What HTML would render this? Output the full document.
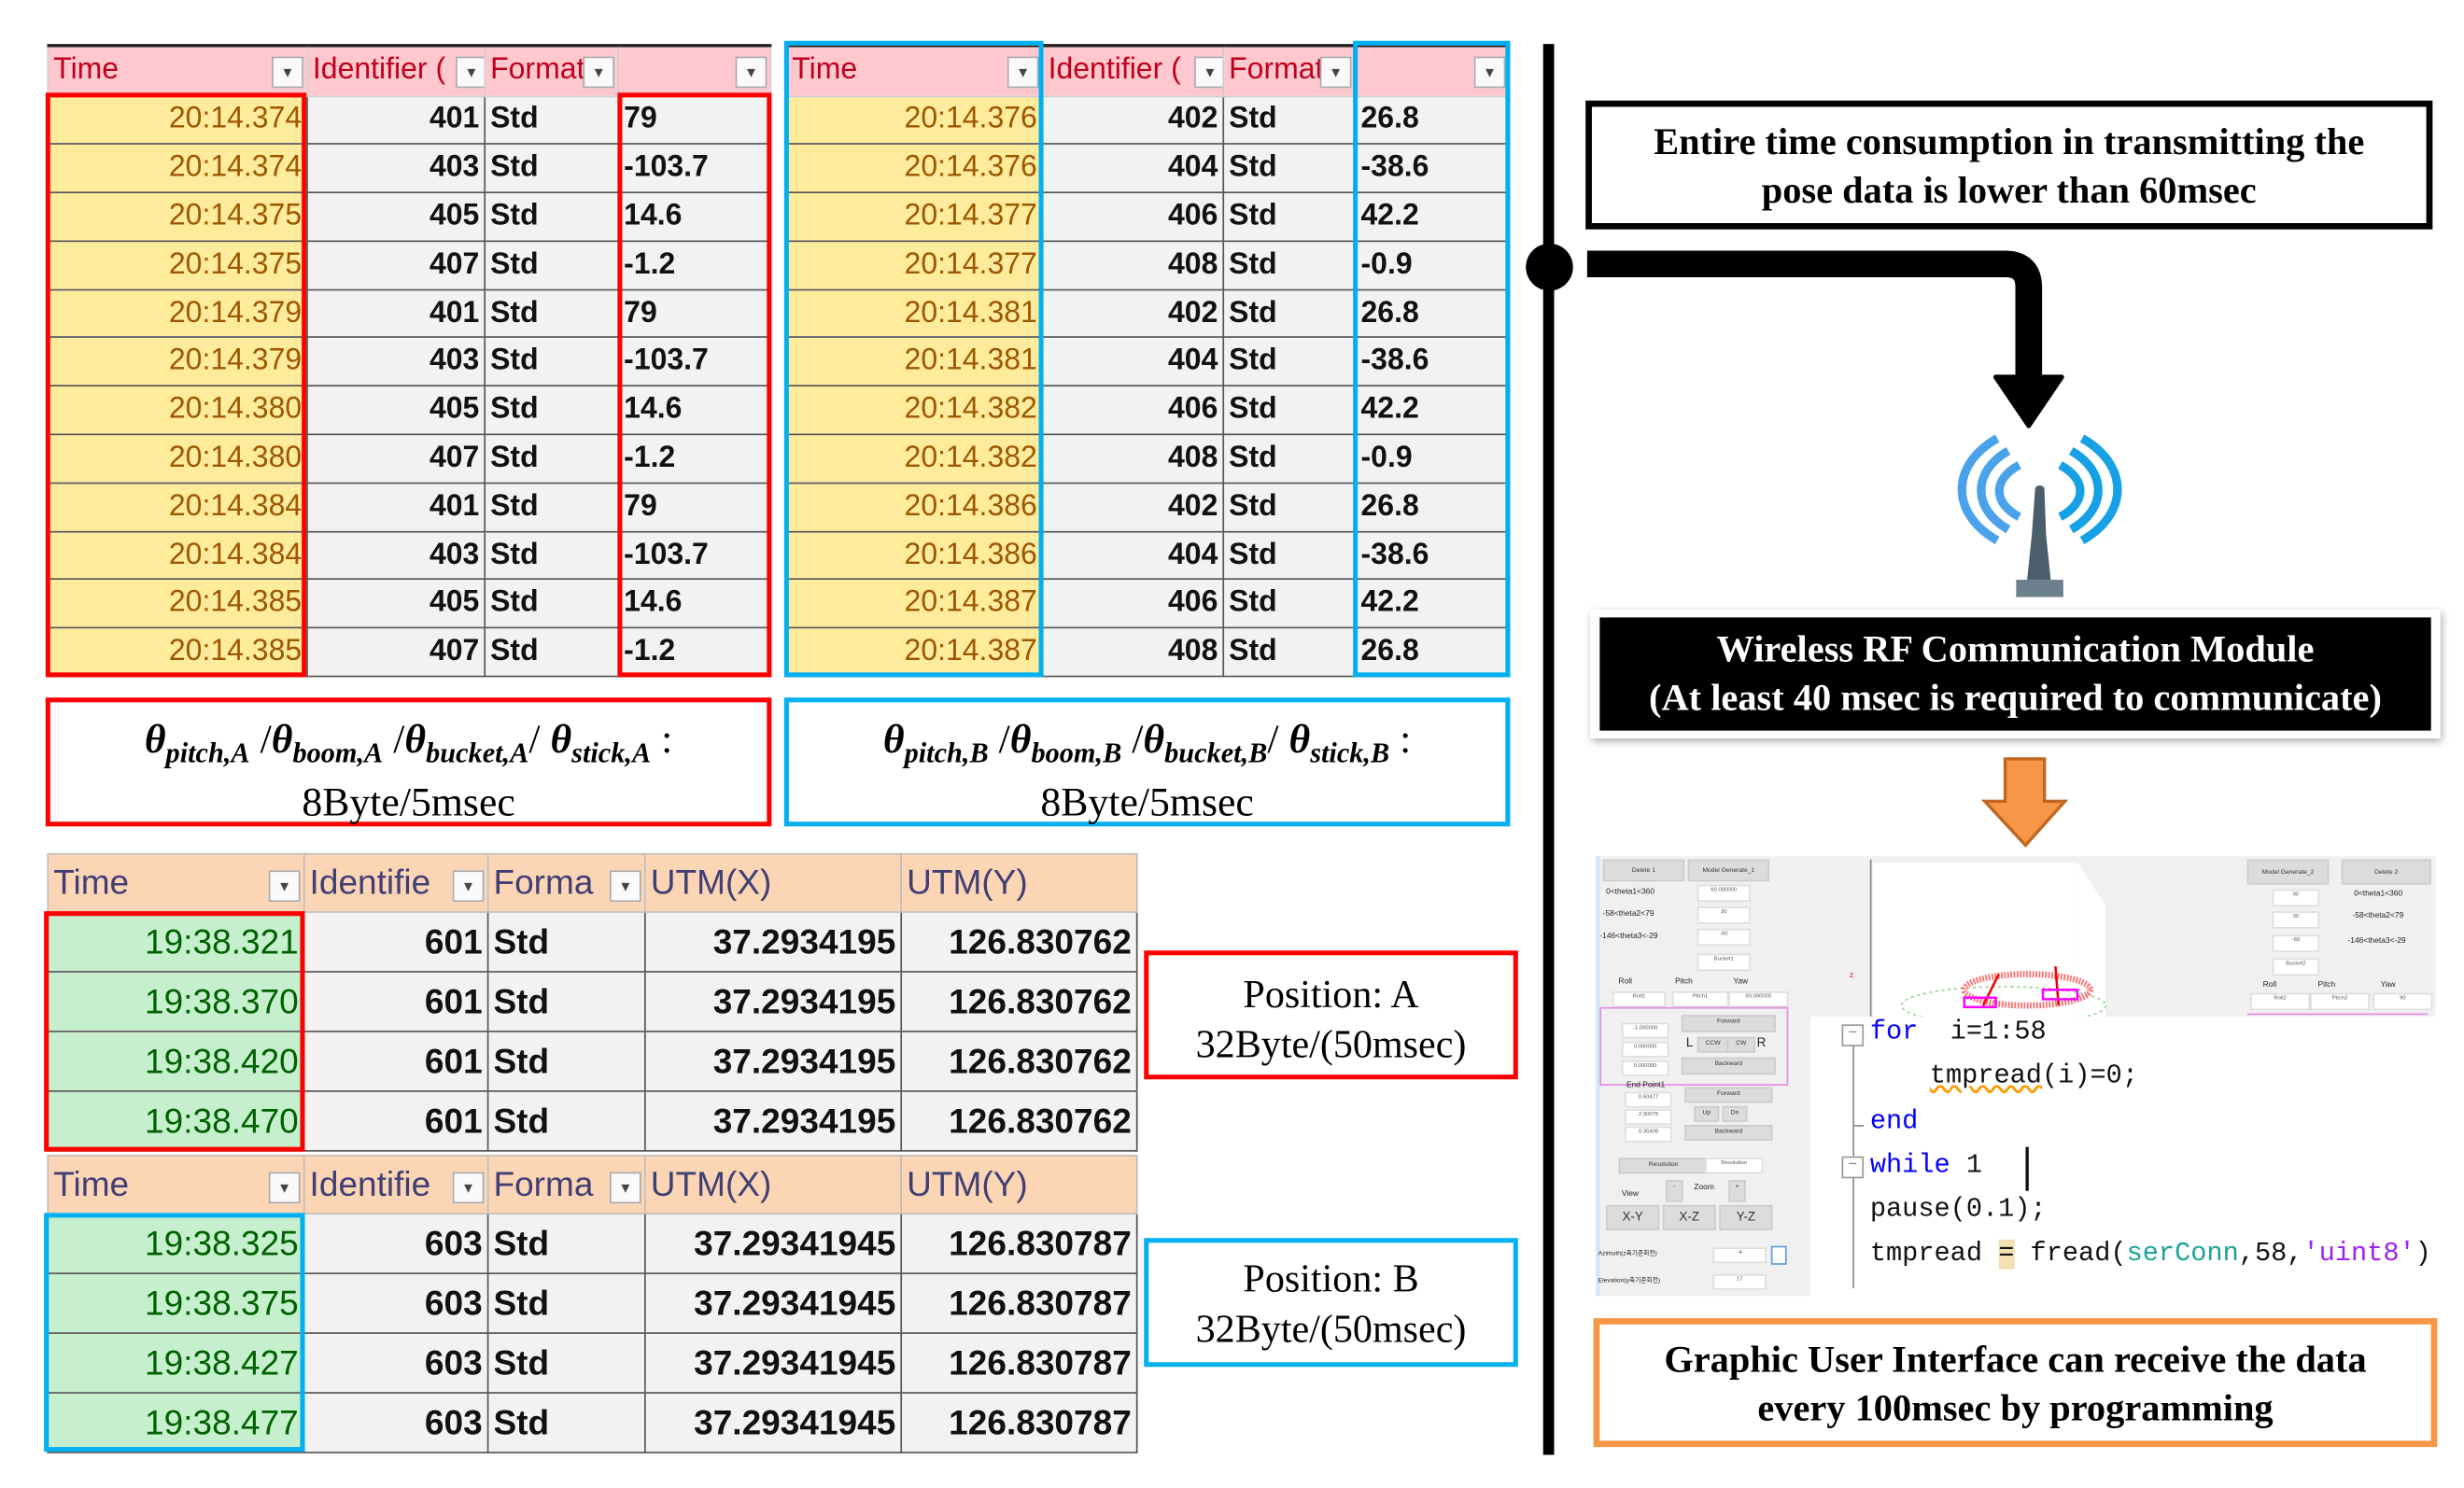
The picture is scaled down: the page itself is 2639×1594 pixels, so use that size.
<!DOCTYPE html>
<html><head><meta charset="utf-8">
<style>
html,body{margin:0;padding:0;background:#fff;width:2639px;height:1593px;overflow:hidden}
#w{position:absolute;left:0;top:0;width:1568px;height:947px;transform:scale(1.68304);transform-origin:0 0;font-family:"Liberation Sans Narrow","Liberation Sans",sans-serif}
.a{position:absolute}
table{border-collapse:collapse;table-layout:fixed;position:absolute;font-size:19px}
td{padding:0 3px;white-space:nowrap;overflow:hidden;border:1px solid #555;background:#f2f2f2;color:#111}
td.r{text-align:right}
.t1 tr.h td{background:#ffc7ce;color:#c0001a;border-color:#ccc;border-top:2px solid #222}
.t1 td.y{background:#ffeb9c;color:#9c5700}
.t2 tr.h td{background:#fcd5b4;color:#3f3f76;border-color:#bbb}
.t2 td.g{background:#c6efce;color:#006100}
.t2{font-size:22px}
.t2 td{font-weight:bold}
.t2 td.g,.t2 tr.h td{font-weight:normal}
.dd{position:absolute;right:2px;top:6px;width:18px;height:18px;background:#fafafa;border:1px solid #aaa;font-size:9px;text-align:center;line-height:18px;color:#444}
.rb{position:absolute;border:3.5px solid #f00;box-sizing:border-box}
.bb{position:absolute;border:3.5px solid #00b0f0;box-sizing:border-box}
.ser{font-family:"Liberation Serif",serif;font-weight:bold;color:#000;text-align:center}
.cap{font-family:"Liberation Serif",serif;text-align:center;font-size:26px;line-height:32px}
.cap i{font-weight:bold}
.cap sub{font-size:18px}
.btn{position:absolute;background:#dcdcdc;border:1px solid #ccc;font-size:4px;color:#333;text-align:center;font-family:"Liberation Sans",sans-serif}
.inp{position:absolute;background:#fff;border:1px solid #ddd;font-size:3.5px;text-align:center;color:#555}
.lb{position:absolute;font-size:5px;color:#222;font-family:"Liberation Sans",sans-serif}
.code{position:absolute;font-family:"Liberation Mono",monospace;font-size:17px;color:#111;white-space:pre}
</style></head><body><div id="w">

<table class="t1" style="left:30px;top:28px;width:460px">
<colgroup><col style="width:165px"><col style="width:113px"><col style="width:85px"><col style="width:97px"></colgroup>
<tr class="h" style="height:32px"><td style="position:relative">Time<span class="dd">▼</span></td><td style="position:relative">Identifier (<span class="dd" style="right:-2px">▼</span></td><td style="position:relative">Format<span class="dd">▼</span></td><td style="position:relative"><span class="dd">▼</span></td></tr>
<tr style="height:30.8px"><td class="y r">20:14.374</td><td class="r"><b>401</b></td><td><b>Std</b></td><td><b>79</b></td></tr>
<tr style="height:30.8px"><td class="y r">20:14.374</td><td class="r"><b>403</b></td><td><b>Std</b></td><td><b>-103.7</b></td></tr>
<tr style="height:30.8px"><td class="y r">20:14.375</td><td class="r"><b>405</b></td><td><b>Std</b></td><td><b>14.6</b></td></tr>
<tr style="height:30.8px"><td class="y r">20:14.375</td><td class="r"><b>407</b></td><td><b>Std</b></td><td><b>-1.2</b></td></tr>
<tr style="height:30.8px"><td class="y r">20:14.379</td><td class="r"><b>401</b></td><td><b>Std</b></td><td><b>79</b></td></tr>
<tr style="height:30.8px"><td class="y r">20:14.379</td><td class="r"><b>403</b></td><td><b>Std</b></td><td><b>-103.7</b></td></tr>
<tr style="height:30.8px"><td class="y r">20:14.380</td><td class="r"><b>405</b></td><td><b>Std</b></td><td><b>14.6</b></td></tr>
<tr style="height:30.8px"><td class="y r">20:14.380</td><td class="r"><b>407</b></td><td><b>Std</b></td><td><b>-1.2</b></td></tr>
<tr style="height:30.8px"><td class="y r">20:14.384</td><td class="r"><b>401</b></td><td><b>Std</b></td><td><b>79</b></td></tr>
<tr style="height:30.8px"><td class="y r">20:14.384</td><td class="r"><b>403</b></td><td><b>Std</b></td><td><b>-103.7</b></td></tr>
<tr style="height:30.8px"><td class="y r">20:14.385</td><td class="r"><b>405</b></td><td><b>Std</b></td><td><b>14.6</b></td></tr>
<tr style="height:30.8px"><td class="y r">20:14.385</td><td class="r"><b>407</b></td><td><b>Std</b></td><td><b>-1.2</b></td></tr>
</table>
<div class="rb" style="left:29px;top:59px;width:166px;height:372px"></div>
<div class="rb" style="left:393px;top:59px;width:98px;height:372px"></div>

<table class="t1" style="left:500px;top:28px;width:460px">
<colgroup><col style="width:163px"><col style="width:115px"><col style="width:84px"><col style="width:98px"></colgroup>
<tr class="h" style="height:32px"><td style="position:relative">Time<span class="dd">▼</span></td><td style="position:relative">Identifier (<span class="dd" style="right:-2px">▼</span></td><td style="position:relative">Format<span class="dd">▼</span></td><td style="position:relative"><span class="dd">▼</span></td></tr>
<tr style="height:30.8px"><td class="y r">20:14.376</td><td class="r"><b>402</b></td><td><b>Std</b></td><td><b>26.8</b></td></tr>
<tr style="height:30.8px"><td class="y r">20:14.376</td><td class="r"><b>404</b></td><td><b>Std</b></td><td><b>-38.6</b></td></tr>
<tr style="height:30.8px"><td class="y r">20:14.377</td><td class="r"><b>406</b></td><td><b>Std</b></td><td><b>42.2</b></td></tr>
<tr style="height:30.8px"><td class="y r">20:14.377</td><td class="r"><b>408</b></td><td><b>Std</b></td><td><b>-0.9</b></td></tr>
<tr style="height:30.8px"><td class="y r">20:14.381</td><td class="r"><b>402</b></td><td><b>Std</b></td><td><b>26.8</b></td></tr>
<tr style="height:30.8px"><td class="y r">20:14.381</td><td class="r"><b>404</b></td><td><b>Std</b></td><td><b>-38.6</b></td></tr>
<tr style="height:30.8px"><td class="y r">20:14.382</td><td class="r"><b>406</b></td><td><b>Std</b></td><td><b>42.2</b></td></tr>
<tr style="height:30.8px"><td class="y r">20:14.382</td><td class="r"><b>408</b></td><td><b>Std</b></td><td><b>-0.9</b></td></tr>
<tr style="height:30.8px"><td class="y r">20:14.386</td><td class="r"><b>402</b></td><td><b>Std</b></td><td><b>26.8</b></td></tr>
<tr style="height:30.8px"><td class="y r">20:14.386</td><td class="r"><b>404</b></td><td><b>Std</b></td><td><b>-38.6</b></td></tr>
<tr style="height:30.8px"><td class="y r">20:14.387</td><td class="r"><b>406</b></td><td><b>Std</b></td><td><b>42.2</b></td></tr>
<tr style="height:30.8px"><td class="y r">20:14.387</td><td class="r"><b>408</b></td><td><b>Std</b></td><td><b>26.8</b></td></tr>
</table>
<div class="bb" style="left:499px;top:26px;width:165px;height:405px"></div>
<div class="bb" style="left:861px;top:26px;width:100px;height:405px"></div>

<div class="rb cap" style="left:29px;top:444px;width:462px;height:82px;padding-top:8px">
<i>θ<sub>pitch,A</sub></i> /<i>θ<sub>boom,A</sub></i> /<i>θ<sub>bucket,A</sub></i>/ <i>θ<sub>stick,A</sub></i> :<br>8Byte/5msec</div>
<div class="bb cap" style="left:499px;top:444px;width:462px;height:82px;padding-top:8px">
<i>θ<sub>pitch,B</sub></i> /<i>θ<sub>boom,B</sub></i> /<i>θ<sub>bucket,B</sub></i>/ <i>θ<sub>stick,B</sub></i> :<br>8Byte/5msec</div>

<table class="t2" style="left:30px;top:543px;width:693px">
<colgroup><col style="width:163px"><col style="width:117px"><col style="width:100px"><col style="width:163px"><col style="width:150px"></colgroup>
<tr class="h" style="height:37px"><td style="position:relative">Time<span class="dd" style="top:10px">▼</span></td><td style="position:relative">Identifie<span class="dd" style="top:10px">▼</span></td><td style="position:relative">Forma<span class="dd" style="top:10px">▼</span></td><td>UTM(X)</td><td>UTM(Y)</td></tr>
<tr style="height:38px"><td class="g r">19:38.321</td><td class="r">601</td><td>Std</td><td class="r">37.2934195</td><td class="r">126.830762</td></tr>
<tr style="height:38px"><td class="g r">19:38.370</td><td class="r">601</td><td>Std</td><td class="r">37.2934195</td><td class="r">126.830762</td></tr>
<tr style="height:38px"><td class="g r">19:38.420</td><td class="r">601</td><td>Std</td><td class="r">37.2934195</td><td class="r">126.830762</td></tr>
<tr style="height:38px"><td class="g r">19:38.470</td><td class="r">601</td><td>Std</td><td class="r">37.2934195</td><td class="r">126.830762</td></tr>
</table>
<div class="rb" style="left:28px;top:580px;width:166px;height:153px"></div>
<table class="t2" style="left:30px;top:735px;width:693px">
<colgroup><col style="width:163px"><col style="width:117px"><col style="width:100px"><col style="width:163px"><col style="width:150px"></colgroup>
<tr class="h" style="height:37px"><td style="position:relative">Time<span class="dd" style="top:10px">▼</span></td><td style="position:relative">Identifie<span class="dd" style="top:10px">▼</span></td><td style="position:relative">Forma<span class="dd" style="top:10px">▼</span></td><td>UTM(X)</td><td>UTM(Y)</td></tr>
<tr style="height:38px"><td class="g r">19:38.325</td><td class="r">603</td><td>Std</td><td class="r">37.29341945</td><td class="r">126.830787</td></tr>
<tr style="height:38px"><td class="g r">19:38.375</td><td class="r">603</td><td>Std</td><td class="r">37.29341945</td><td class="r">126.830787</td></tr>
<tr style="height:38px"><td class="g r">19:38.427</td><td class="r">603</td><td>Std</td><td class="r">37.29341945</td><td class="r">126.830787</td></tr>
<tr style="height:38px"><td class="g r">19:38.477</td><td class="r">603</td><td>Std</td><td class="r">37.29341945</td><td class="r">126.830787</td></tr>
</table>
<div class="bb" style="left:28px;top:772px;width:166px;height:152px"></div>

<div class="rb cap" style="left:728px;top:605px;width:238px;height:82px;padding-top:10px;line-height:32px;font-size:25px">Position: A<br>32Byte/(50msec)</div>
<div class="bb cap" style="left:728px;top:788px;width:238px;height:82px;padding-top:8px;line-height:32px;font-size:25px">Position: B<br>32Byte/(50msec)</div>

<div class="a" style="left:982px;top:28px;width:7px;height:898px;background:#000"></div>
<svg class="a" style="left:960px;top:140px" width="400" height="250" viewBox="960 140 400 250">
<circle cx="986" cy="170" r="15" fill="#000"/>
<path d="M1010 168 H1276 Q1291 168 1291 183 V245" stroke="#000" stroke-width="17" fill="none"/>
<path d="M1270 240 H1312 L1291 271 Z" fill="#000" stroke="#000" stroke-width="3" stroke-linejoin="round"/>
<g fill="none" stroke-width="5.5">
<path d="M1271 279 C1241 296 1241 327 1271 344" stroke="#4aa3ea"/>
<path d="M1278 287 C1255 300 1255 324 1278 337" stroke="#4aa3ea"/>
<path d="M1285 296 C1268 305 1268 320 1285 329" stroke="#4aa3ea"/>
<path d="M1325 279 C1355 296 1355 327 1325 344" stroke="#16a0e6"/>
<path d="M1318 287 C1341 300 1341 324 1318 337" stroke="#16a0e6"/>
<path d="M1311 296 C1328 305 1328 320 1311 329" stroke="#16a0e6"/>
</g>
<path d="M1295 312 Q1295 309 1298 309 Q1301 309 1301 312 L1302 340 L1305 369 L1290 369 L1293 340 Z" fill="#4b5e6c"/>
<rect x="1283" y="369" width="30" height="11" fill="#6c7f8d"/>
</svg>

<div class="a ser" style="left:1009px;top:64px;width:539px;height:82px;box-sizing:border-box;border:4px solid #000;font-size:24px;line-height:31px;padding-top:8px">Entire time consumption in transmitting the<br>pose data is lower than 60msec</div>

<div class="a" style="left:1012px;top:388px;width:541px;height:82px;background:#fff;box-shadow:1px 2px 5px rgba(0,0,0,.35)"></div>
<div class="a ser" style="left:1018px;top:393px;width:529px;height:72px;background:#000;color:#fff;font-size:24px;line-height:31px;padding-top:6px;box-sizing:border-box">Wireless RF Communication Module<br>(At least 40 msec is required to communicate)</div>

<svg class="a" style="left:1260px;top:480px" width="58" height="62" viewBox="0 0 58 62">
<path d="M16 3 H41 V30 H54 L29 58 L3 30 H16 Z" fill="#f79646" stroke="#c0661f" stroke-width="2"/>
</svg>

<div class="a" style="left:1015px;top:545px;width:535px;height:280px;background:#f0f0f0"></div>
<div class="a" style="left:1016px;top:545px;width:2px;height:280px;background:#cfe4f7"></div>
<div class="a" style="left:1192px;top:549px;width:128px;height:98px;background:#fff"></div>
<div class="a" style="left:1320px;top:549px;width:20px;height:98px;background:#fff;clip-path:polygon(0 0,10% 0,100% 28%,100% 100%,0 100%)"></div>
<div class="a" style="left:1190px;top:547px;width:1px;height:100px;background:#888"></div>
<svg class="a" style="left:1190px;top:595px" width="160" height="52">
<ellipse cx="85" cy="45" rx="65" ry="12" fill="none" stroke="#9bd49b" stroke-dasharray="2 2"/>
<ellipse cx="100" cy="35" rx="40" ry="10" fill="none" stroke="#f66" stroke-width="4" stroke-dasharray="1 1"/>
<path d="M72 45 L82 25 M120 45 L118 20" stroke="#e00" stroke-width="1.5"/>
<rect x="60" y="40" width="20" height="6" fill="none" stroke="#f0f" stroke-width="1.5"/>
<rect x="110" y="35" width="22" height="6" fill="none" stroke="#f0f" stroke-width="1.5"/>
</svg>
<div class="lb" style="left:1177px;top:618px;color:#e00">z</div>

<div class="btn" style="left:1020px;top:547px;width:50px;height:12px;line-height:12px">Delete 1</div>
<div class="btn" style="left:1074px;top:547px;width:50px;height:12px;line-height:12px">Model Generate_1</div>
<div class="lb" style="left:1022px;top:565px">0&lt;theta1&lt;360</div>
<div class="lb" style="left:1020px;top:579px">-58&lt;theta2&lt;79</div>
<div class="lb" style="left:1018px;top:593px">-146&lt;theta3&lt;-29</div>
<div class="inp" style="left:1080px;top:563px;width:32px;height:9px">60.000000</div>
<div class="inp" style="left:1080px;top:577px;width:32px;height:9px">30</div>
<div class="inp" style="left:1080px;top:591px;width:32px;height:9px">-60</div>
<div class="inp" style="left:1080px;top:607px;width:32px;height:9px">Bucket1</div>
<div class="lb" style="left:1030px;top:622px">Roll</div><div class="lb" style="left:1066px;top:622px">Pitch</div><div class="lb" style="left:1103px;top:622px">Yaw</div>
<div class="inp" style="left:1026px;top:631px;width:32px;height:8px">Roll1</div>
<div class="inp" style="left:1064px;top:631px;width:34px;height:8px">Pitch1</div>
<div class="inp" style="left:1100px;top:631px;width:36px;height:8px">60.000000</div>
<div class="a" style="left:1018px;top:641px;width:118px;height:48px;border:1px solid #e28be0"></div>
<div class="btn" style="left:1070px;top:646px;width:58px;height:9px">Forward</div>
<div class="btn" style="left:1070px;top:673px;width:58px;height:9px">Backward</div>
<div class="lb" style="left:1073px;top:659px;font-size:8px">L</div><div class="lb" style="left:1118px;top:659px;font-size:8px">R</div>
<div class="btn" style="left:1080px;top:660px;width:18px;height:8px">CCW</div><div class="btn" style="left:1099px;top:660px;width:16px;height:8px">CW</div>
<div class="inp" style="left:1032px;top:651px;width:28px;height:8px">-1.000000</div>
<div class="inp" style="left:1032px;top:663px;width:28px;height:8px">0.000000</div>
<div class="inp" style="left:1032px;top:675px;width:28px;height:8px">0.000000</div>
<div class="lb" style="left:1035px;top:688px">End Point1</div>
<div class="inp" style="left:1034px;top:695px;width:28px;height:8px">0.60477</div>
<div class="inp" style="left:1034px;top:706px;width:28px;height:8px">2.90075</div>
<div class="inp" style="left:1034px;top:717px;width:28px;height:8px">0.36408</div>
<div class="btn" style="left:1072px;top:692px;width:54px;height:8px">Forward</div>
<div class="btn" style="left:1078px;top:704px;width:14px;height:8px">Up</div><div class="btn" style="left:1096px;top:704px;width:14px;height:8px">Dn</div>
<div class="btn" style="left:1072px;top:716px;width:54px;height:8px">Backward</div>
<div class="btn" style="left:1030px;top:737px;width:55px;height:8px">Resolution</div>
<div class="inp" style="left:1085px;top:737px;width:35px;height:8px">Resolution</div>
<div class="lb" style="left:1032px;top:757px">View</div><div class="lb" style="left:1078px;top:753px">Zoom</div>
<div class="btn" style="left:1060px;top:751px;width:9px;height:12px">-</div><div class="btn" style="left:1100px;top:751px;width:9px;height:12px">+</div>
<div class="btn" style="left:1022px;top:767px;width:32px;height:14px;font-size:8px;line-height:14px">X-Y</div>
<div class="btn" style="left:1058px;top:767px;width:32px;height:14px;font-size:8px;line-height:14px">X-Z</div>
<div class="btn" style="left:1094px;top:767px;width:32px;height:14px;font-size:8px;line-height:14px">Y-Z</div>
<div class="lb" style="left:1017px;top:795px;font-size:4px">Azimuth(z축기준회전)</div>
<div class="lb" style="left:1017px;top:812px;font-size:4px">Elevation(y축기준회전)</div>
<div class="inp" style="left:1090px;top:794px;width:32px;height:8px">-4</div>
<div class="inp" style="left:1090px;top:811px;width:32px;height:8px">17</div>
<div class="a" style="left:1127px;top:793px;width:8px;height:10px;border:1px solid #5b9bd5;background:#fff"></div>

<div class="btn" style="left:1430px;top:547px;width:50px;height:14px;line-height:14px">Model Generate_2</div>
<div class="btn" style="left:1490px;top:547px;width:55px;height:14px;line-height:14px">Delete 2</div>
<div class="inp" style="left:1446px;top:566px;width:28px;height:9px">90</div>
<div class="inp" style="left:1446px;top:580px;width:28px;height:9px">30</div>
<div class="inp" style="left:1446px;top:595px;width:28px;height:9px">-60</div>
<div class="inp" style="left:1446px;top:610px;width:28px;height:9px">Bucket2</div>
<div class="lb" style="left:1498px;top:566px">0&lt;theta1&lt;360</div>
<div class="lb" style="left:1497px;top:580px">-58&lt;theta2&lt;79</div>
<div class="lb" style="left:1494px;top:596px">-146&lt;theta3&lt;-29</div>
<div class="lb" style="left:1440px;top:624px">Roll</div><div class="lb" style="left:1475px;top:624px">Pitch</div><div class="lb" style="left:1515px;top:624px">Yaw</div>
<div class="inp" style="left:1432px;top:632px;width:36px;height:9px">Roll2</div>
<div class="inp" style="left:1470px;top:632px;width:36px;height:9px">Pitch2</div>
<div class="inp" style="left:1510px;top:632px;width:36px;height:9px">90</div>
<div class="a" style="left:1430px;top:645px;width:115px;height:1px;background:#e28be0"></div>

<div class="a" style="left:1152px;top:647px;width:398px;height:178px;background:#fff"></div>
<div class="a" style="left:1179px;top:660px;width:1px;height:160px;background:#888"></div>
<div class="a" style="left:1172px;top:652px;width:12px;height:12px;border:1px solid #999;background:#fff;font-size:10px;line-height:10px;text-align:center;color:#888">−</div>
<div class="a" style="left:1172px;top:736px;width:12px;height:12px;border:1px solid #999;background:#fff;font-size:10px;line-height:10px;text-align:center;color:#888">−</div>
<div class="a" style="left:1180px;top:716px;width:6px;height:1px;background:#888"></div>
<div class="code" style="left:1190px;top:648px;color:#00f">for  <span style="color:#111">i=1:58</span></div>
<div class="code" style="left:1228px;top:676px"><span style="text-decoration:underline wavy #f90">tmpread</span>(i)=0;</div>
<div class="code" style="left:1190px;top:705px;color:#00f">end</div>
<div class="code" style="left:1190px;top:733px"><span style="color:#00f">while</span> 1</div>
<div class="a" style="left:1289px;top:730px;width:2px;height:28px;background:#111"></div>
<div class="code" style="left:1190px;top:761px">pause(0.1);</div>
<div class="code" style="left:1190px;top:789px">tmpread <span style="background:#f3e0b0">=</span> fread(<span style="color:#1aa39a">serConn</span>,58,<span style="color:#a020f0">'uint8'</span>)</div>

<div class="a ser" style="left:1014px;top:839px;width:537px;height:82px;box-sizing:border-box;border:4px solid #f79646;font-size:24px;line-height:31px;padding-top:8px">Graphic User Interface can receive the data<br>every 100msec by programming</div>

</div></body></html>
